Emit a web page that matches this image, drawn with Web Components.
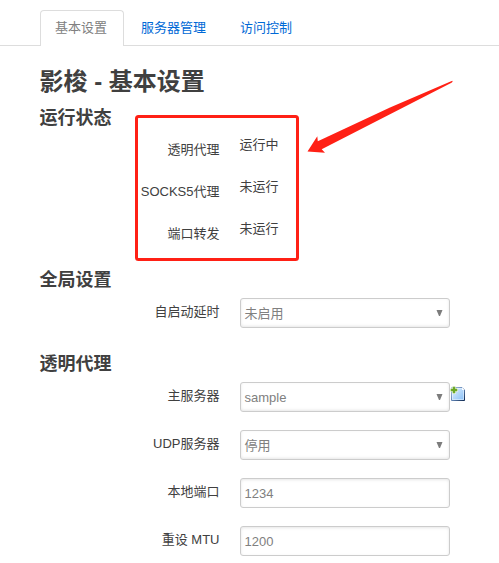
<!DOCTYPE html>
<html lang="zh-CN">
<head>
<meta charset="utf-8">
<title>影梭 - 基本设置</title>
<style>
html, body { margin: 0; background: #fff; }
body { height: 563px; overflow: hidden; font: 13px/18px "Liberation Sans", "Noto Sans CJK SC", sans-serif; color: #404040; }
</style>
</head>
<body>
<settings-page>
  <tab-bar slot="tabs">
    <tab-item active>基本设置</tab-item>
    <tab-item>服务器管理</tab-item>
    <tab-item>访问控制</tab-item>
  </tab-bar>
  <span slot="title">影梭 - 基本设置</span>
  <settings-section heading="运行状态">
    <status-row label="透明代理">运行中</status-row>
    <status-row label="SOCKS5代理">未运行</status-row>
    <status-row label="端口转发">未运行</status-row>
  </settings-section>
  <settings-section heading="全局设置">
    <field-row label="自启动延时"><field-box select>未启用</field-box></field-row>
  </settings-section>
  <settings-section heading="透明代理">
    <field-row label="主服务器"><field-box select>sample</field-box><add-icon></add-icon></field-row>
    <field-row label="UDP服务器"><field-box select>停用</field-box></field-row>
    <field-row label="本地端口"><field-box>1234</field-box></field-row>
    <field-row label="重设 MTU"><field-box>1200</field-box></field-row>
  </settings-section>
  <red-marker slot="marker"></red-marker>
</settings-page>
<script>
function define(name, html) {
  customElements.define(name, class extends HTMLElement {
    constructor() {
      super();
      const root = this.attachShadow({ mode: 'open' });
      root.innerHTML = html;
    }
    connectedCallback() {
      for (const key of ['label', 'heading']) {
        const el = this.shadowRoot.querySelector('.' + key);
        if (el && this.hasAttribute(key)) el.textContent = this.getAttribute(key);
      }
    }
  });
}

define('settings-page', `<style>
:host { display: block; position: relative; height: 563px; padding-top: 10px; box-sizing: border-box; overflow: hidden; }
h2 { margin: 18px 0 0 39.5px; font-size: 24px; line-height: 36px; }
main { padding-left: 39.5px; }
</style><slot name="tabs"></slot><h2><slot name="title"></slot></h2><main><slot></slot></main><slot name="marker"></slot>`);

define('tab-bar', `<style>
:host { display: flex; gap: 2px; height: 36px; box-sizing: border-box; padding-left: 40px; border-bottom: 1px solid #ddd; }
</style><slot></slot>`);

define('tab-item', `<style>
:host { display: block; box-sizing: border-box; height: 36px; padding: 0 15px; border: 1px solid transparent; border-bottom: 0; border-radius: 4px 4px 0 0; line-height: 34px; color: #0069d6; }
:host([active]) { color: #808080; background: #fff; border-color: #ddd; padding: 0 16px 0 14px; margin-right: -1px; }
</style><slot></slot>`);

define('settings-section', `<style>
:host { display: block; }
h3 { margin: 0; font-size: 18px; line-height: 36px; }
</style><h3 class="heading"></h3><slot></slot>`);

define('status-row', `<style>
:host { display: grid; grid-template-columns: 180px 1fr; column-gap: 20px; height: 42px; }
.label { text-align: right; padding-top: 5px; }
</style><span class="label"></span><span><slot></slot></span>`);

define('field-row', `<style>
:host { display: grid; grid-template-columns: 180px 1fr; column-gap: 20.5px; height: 48px; }
.label { text-align: right; padding-top: 5px; }
.control { display: flex; align-items: flex-start; }
</style><span class="label"></span><div class="control"><slot></slot></div>`);

define('field-box', `<style>
:host { display: flex; justify-content: space-between; box-sizing: border-box; width: 210px; height: 30px; padding: 0 6px 0 3.5px; border: 1px solid #ccc; border-radius: 3px; box-shadow: inset 0 1px 3px rgba(0,0,0,.1); color: #808080; line-height: 29px; }
svg { display: none; width: 7px; height: 6px; margin-top: 11px; }
:host([select]) svg { display: block; }
:host([select]) { line-height: 30px; box-shadow: inset 0 -1px 3px rgba(0,0,0,.1); }
</style><span><slot></slot></span><svg viewBox="0 0 7 6"><path d="M.5 0h6L4 6H3z" fill="#7c7c7c"/></svg>`);

define('add-icon', `<style>
:host { display: block; width: 16px; height: 16px; margin-top: 4px; }
svg { display: block; }
</style><svg width="16" height="16" viewBox="0 0 16 16">
<defs><linearGradient id="g" x1="0" y1="0" x2="1" y2="1"><stop offset="0" stop-color="#e4f1fd"/><stop offset="1" stop-color="#86bff8"/></linearGradient>
<linearGradient id="b" x1="0" y1="0" x2="1" y2="1"><stop offset="0" stop-color="#a9c1e2"/><stop offset=".55" stop-color="#5d80b0"/><stop offset="1" stop-color="#0f2850"/></linearGradient></defs>
<path d="M1.5 1.5h10.5l2.5 2.5v10.5h-13z" fill="url(#g)" stroke="url(#b)"/>
<path d="M2.5 13.5v-11h9l2 2v9z" fill="none" stroke="#fff" stroke-opacity=".55" stroke-width=".8"/>
<path d="M12 1.5v2.5h2.5z" fill="#fff"/>
<path d="M2 0h4v2h2v4H6v2H2V6H0V2h2z" fill="#fff" fill-opacity=".7"/>
<path d="M3 1h2v2h2v2H5v2H3V5H1V3h2z" fill="#6aa624"/><path d="M2.8.8h2.4v2h2v2.4h-2v2H2.8v-2h-2V2.8h2z" fill="none" stroke="#80b440" stroke-width=".5"/>
</svg>`);

define('red-marker', `<style>
:host { position: absolute; inset: 0; pointer-events: none; }
svg { display: block; }
</style><svg width="499" height="563" viewBox="0 0 499 563">
<rect x="136.5" y="116.5" width="161" height="143" rx="2" fill="none" stroke="#ff2015" stroke-width="3"/>
<path d="M452.3 80.8Q453.3 81.8 451.5 82.8L321.7 149.2L325 152.7L307.5 151.5L317.3 136.2L317.8 141.3L390 107.5Z" fill="#ff2015"/>
</svg>`);
</script>
</body>
</html>
